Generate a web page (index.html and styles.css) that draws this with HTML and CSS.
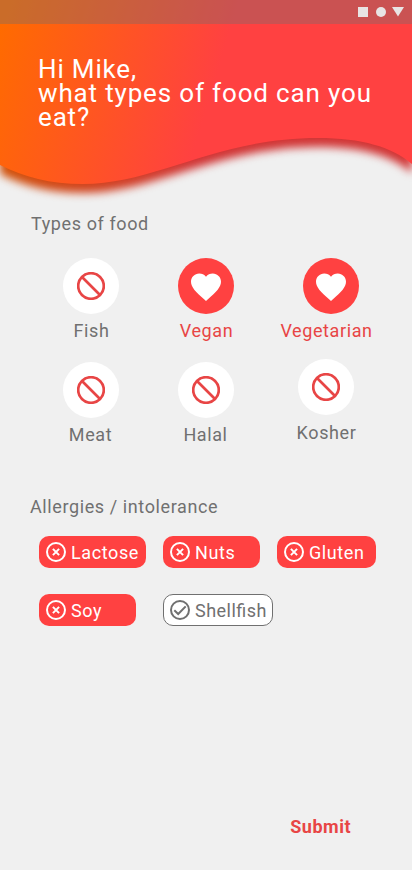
FILE: index.html
```html
<!DOCTYPE html>
<html lang="en">
<head>
<meta charset="utf-8">
<meta name="viewport" content="width=device-width, initial-scale=1">
<title>Food preferences</title>
<link rel="stylesheet" href="styles.css">
</head>
<body>
<svg class="defs" width="0" height="0" aria-hidden="true">
  <defs>
    <symbol id="ban" viewBox="0 0 28 28"><circle cx="14" cy="14" r="12.8"/><path d="M5 5L23 23"/></symbol>
    <symbol id="heart" viewBox="0 0 24 24"><path d="M12 21.35l-1.45-1.32C5.4 15.36 2 12.28 2 8.5 2 5.42 4.42 3 7.5 3c1.74 0 3.41.81 4.5 2.09C13.09 3.81 14.76 3 16.5 3 19.58 3 22 5.42 22 8.5c0 3.78-3.4 6.86-8.55 11.54L12 21.35z"/></symbol>
    <symbol id="cross" viewBox="0 0 20 20"><circle cx="10" cy="10" r="9"/><path d="M6.9 6.9L13.1 13.1M13.1 6.9L6.9 13.1"/></symbol>
    <symbol id="check" viewBox="0 0 20 20"><circle cx="10" cy="10" r="9"/><path d="M4.3 10.2L8.2 14L15.7 6.4"/></symbol>
  </defs>
</svg>
<div class="screen">
  <header class="hero">
    <svg class="wave" width="412" height="215" viewBox="0 0 412 215" aria-hidden="true">
      <defs>
        <linearGradient id="warm" gradientUnits="userSpaceOnUse" x1="0" y1="24" x2="213" y2="88">
          <stop offset="0" stop-color="#ff6b00"/><stop offset="1" stop-color="#ff4141"/>
        </linearGradient>
      </defs>
      <path class="wave-shadow" fill="url(#warm)" d="M0 0H412V164C392 147 362 138 318 138C216 138 156 184 83 184C50 184 24 177 0 165Z"/>
      <path fill="url(#warm)" d="M0 0H412V164C392 147 362 138 318 138C216 138 156 184 83 184C50 184 24 177 0 165Z"/>
    </svg>
    <div class="status">
      <svg width="48" height="12" viewBox="0 0 48 12" aria-hidden="true"><path d="M0 1H10V11H0Z"/><circle cx="23" cy="6" r="5"/><path d="M34 1H46L40 10.5Z"/></svg>
    </div>
    <h1>Hi Mike,<br>what types of food can you eat?</h1>
  </header>
  <main>
    <h2 class="food-title">Types of food</h2>
    <div class="foods">
      <div class="food"><span class="disc"><svg class="ban"><use href="#ban"/></svg></span><span class="label">Fish</span></div>
      <div class="food on"><span class="disc"><svg class="heart"><use href="#heart"/></svg></span><span class="label">Vegan</span></div>
      <div class="food on wide"><span class="disc"><svg class="heart"><use href="#heart"/></svg></span><span class="label">Vegetarian</span></div>
      <div class="food second"><span class="disc"><svg class="ban"><use href="#ban"/></svg></span><span class="label">Meat</span></div>
      <div class="food second"><span class="disc"><svg class="ban"><use href="#ban"/></svg></span><span class="label">Halal</span></div>
      <div class="food kosher"><span class="disc"><svg class="ban"><use href="#ban"/></svg></span><span class="label">Kosher</span></div>
    </div>
    <h2 class="allergy-title">Allergies / intolerance</h2>
    <div class="chips">
      <span class="chip"><svg><use href="#cross"/></svg>Lactose</span>
      <span class="chip short"><svg><use href="#cross"/></svg>Nuts</span>
      <span class="chip gluten"><svg><use href="#cross"/></svg>Gluten</span>
      <span class="chip short"><svg><use href="#cross"/></svg>Soy</span>
      <span class="chip off"><svg><use href="#check"/></svg>Shellfish</span>
    </div>
  </main>
  <button class="submit" type="button">Submit</button>
</div>
</body>
</html>
```
FILE: styles.css
```css
* { box-sizing: border-box; }
body { margin: 0; background: #f0f0f0; font-family: Roboto, sans-serif; color: #707070; }
svg { display: block; }
.defs { position: absolute; }
.screen { width: 412px; height: 870px; display: flex; flex-direction: column; overflow: hidden; }
.hero { position: relative; height: 213px; flex: none; }
.wave { position: absolute; left: 0; top: 0; overflow: visible; }
.wave-shadow { filter: brightness(.82) blur(4px); transform: translateY(9px); }
.status { position: relative; height: 24px; padding: 6px 6px 0 0; display: flex; justify-content: flex-end; background: rgba(112, 112, 112, .37); }
.status svg { fill: #e8e4e4; }
h1 { position: relative; margin: 33px 30px 0 38px; font-size: 26px; font-weight: 400; line-height: 24px; letter-spacing: .84px; color: #fff; }
h2 { margin: 0; font-size: 18px; font-weight: 400; line-height: 22px; letter-spacing: .6px; }
.food-title { padding-left: 31px; }
.foods { margin: 23px 0 0 41px; display: grid; grid-template-columns: 100px 130px 110px; grid-template-rows: 104px 104px; }
.food { display: flex; flex-direction: column; align-items: center; }
.disc { width: 56px; height: 56px; border-radius: 50%; background: #fff; display: flex; align-items: center; justify-content: center; }
.label { margin-top: 6px; padding-left: 1px; font-size: 18px; line-height: 22px; letter-spacing: .6px; white-space: nowrap; }
.second .label { padding: 0 1px 0 0; }
.on .disc { background: #ff4141; }
.on .label { color: #e84545; }
.wide .disc { margin-left: 10px; }
.kosher { margin-top: -3px; }
.kosher .label { margin-top: 7px; }
.ban { width: 28px; height: 28px; fill: none; stroke: #e84545; stroke-width: 2.7; }
.heart { width: 36px; height: 36px; fill: #fff; margin-top: 2px; }
.allergy-title { margin-top: 30px; padding-left: 30px; }
.chips { margin: 18px 0 0 39px; display: grid; grid-template-columns: 124px 114px 110px; row-gap: 26px; justify-items: start; }
.chip { width: 107px; height: 32px; padding: 1px 0 0 7px; display: flex; align-items: center; gap: 5px; border-radius: 10px; background: #ff4141; color: #fff; font-size: 18px; font-weight: 400; letter-spacing: .6px; white-space: nowrap; }
.chip svg { width: 20px; height: 20px; flex: none; margin-top: -1px; fill: none; stroke: currentColor; stroke-width: 2; }
.short { width: 97px; }
.gluten { width: 99px; }
.off { width: 110px; padding-left: 6px; background: #fff; border: 1px solid #707070; color: #707070; letter-spacing: .48px; font-feature-settings: "liga" 1; }
.submit { margin: auto 61px 32px auto; padding: 0; border: 0; background: none; color: #e84545; font: 700 18px/22px Roboto, sans-serif; letter-spacing: .5px; }
```
